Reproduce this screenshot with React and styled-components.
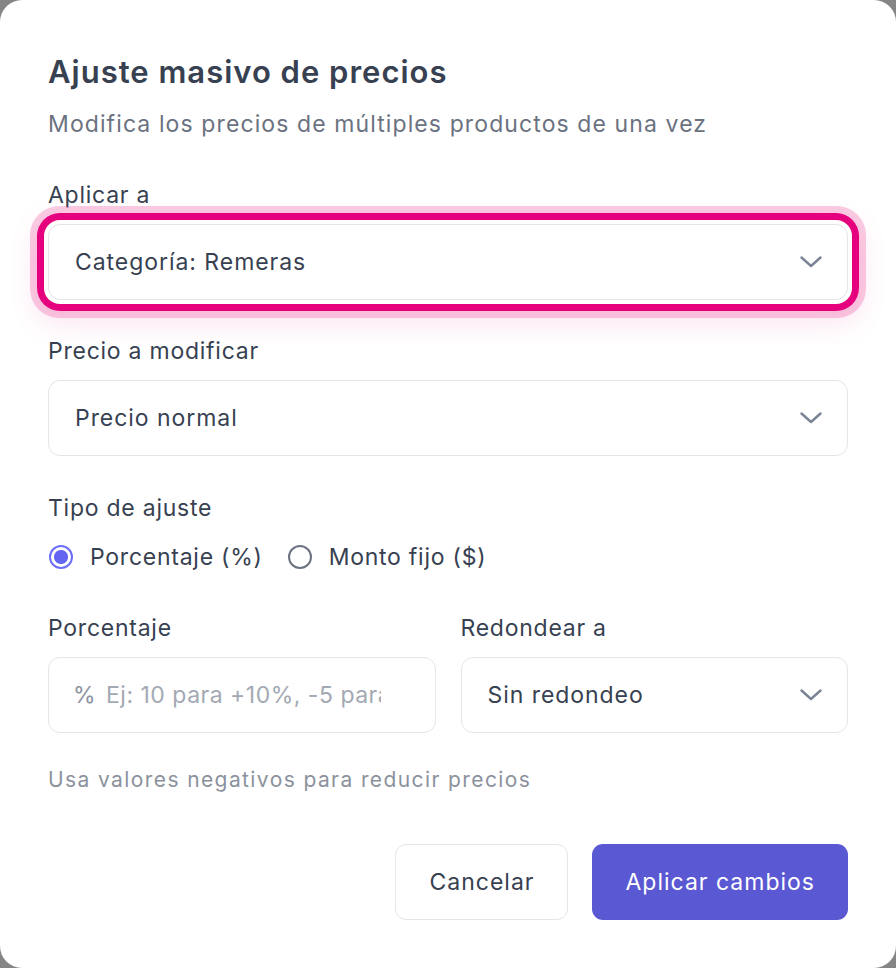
import React from "react";
import styled, { createGlobalStyle } from "styled-components";

const Global = createGlobalStyle`
  * { box-sizing: border-box; }
  html, body { margin: 0; padding: 0; background: #858585; }
  body { font-family: Inter, "Noto Sans", sans-serif; -webkit-font-smoothing: antialiased; }
  #root { min-height: 968px; }
`;

const Dialog = styled.div`
  width: 896px;
  height: 968px;
  background: #ffffff;
  border-radius: 22px;
  padding: 54px 48px 48px;
  display: flex;
  flex-direction: column;
  color: #374151;
`;

const Title = styled.h2`
  margin: 0;
  font-size: 31px;
  line-height: 36px;
  font-weight: 600;
  color: #374151;
  letter-spacing: 1px;
`;

const Subtitle = styled.p`
  margin: 18px 0 0;
  font-size: 23px;
  line-height: 32px;
  color: #6b7280;
  letter-spacing: 1.1px;
`;

const Field = styled.div`
  display: flex;
  flex-direction: column;
  gap: ${(p) => (p.$tight ? 0 : 13)}px;
  margin-top: ${(p) => p.$mt || 0}px;
  min-width: 0;
`;

const Label = styled.label`
  font-size: 23px;
  line-height: 32px;
  color: #374151;
  letter-spacing: 0.75px;
`;

const SelectBox = styled.div`
  position: relative;
  height: 76px;
  border: 1.5px solid #e3e6ea;
  border-radius: 12px;
  background: #fff;
  display: flex;
  align-items: center;
  justify-content: space-between;
  padding: 0 25px 0 26px;
  font-size: 23px;
  color: #374151;
  letter-spacing: 0.95px;
  box-shadow: ${(p) =>
    p.$highlight
      ? "0 0 0 4px #ffffff, 0 0 0 11px #e5007d, 0 0 0 18px rgba(236, 72, 153, 0.28), 0 10px 26px 14px rgba(236, 72, 153, 0.14)"
      : "none"};
`;

const Chevron = () => (
  <svg width="22" height="12" viewBox="0 0 22 12" fill="none">
    <path d="M1.5 1.5L11 10L20.5 1.5" stroke="#7b8494" strokeWidth="2.4" strokeLinecap="round" strokeLinejoin="round" />
  </svg>
);

const RadioRow = styled.div`
  display: flex;
  align-items: center;
  gap: 24px;
  margin-top: 17px;
  height: 32px;
`;

const RadioOption = styled.label`
  display: flex;
  align-items: center;
  gap: 17px;
  font-size: 23px;
  color: #374151;
  letter-spacing: 0.75px;
  cursor: pointer;
`;

const RadioInput = styled.input`
  appearance: none;
  margin: 0 0 0 1px;
  width: 24px;
  height: 24px;
  border-radius: 50%;
  border: 2px solid #6b7280;
  background: #fff;
  &:checked {
    border: 2.5px solid #6b6ef8;
    background: radial-gradient(circle, #6366f1 0 6.5px, #ffffff 7.5px);
  }
`;

const Grid = styled.div`
  display: grid;
  grid-template-columns: 1fr 1fr;
  gap: 25px;
  margin-top: 39px;
`;

const InputBox = styled.div`
  position: relative;
  height: 76px;
  border: 1.5px solid #e3e6ea;
  border-radius: 12px;
  display: flex;
  align-items: center;
`;

const Prefix = styled.span`
  position: absolute;
  left: 24px;
  font-size: 23px;
  color: #8d949f;
`;

const TextInput = styled.input`
  width: 100%;
  height: 100%;
  border: none;
  outline: none;
  background: transparent;
  padding: 0 54px 0 57px;
  font-family: inherit;
  font-size: 23px;
  letter-spacing: 0.5px;
  color: #374151;
  border-radius: 12px;
  &::placeholder { color: #a3a9b3; }
`;

const Hint = styled.p`
  margin: 33px 0 0;
  font-size: 21px;
  line-height: 28px;
  color: #8b929d;
  letter-spacing: 1.4px;
`;

const Footer = styled.div`
  margin-top: auto;
  display: flex;
  justify-content: flex-end;
  gap: 24px;
`;

const Button = styled.button`
  height: 76px;
  padding: 0 33px;
  border-radius: 11px;
  font-family: inherit;
  font-size: 23px;
  letter-spacing: 1px;
  cursor: pointer;
  border: ${(p) => (p.$primary ? "none" : "1.5px solid #e3e6ea")};
  background: ${(p) => (p.$primary ? "#5a58d2" : "#ffffff")};
  color: ${(p) => (p.$primary ? "#ffffff" : "#374151")};
`;

export default function App() {
  return (
    <>
      <Global />
      <Dialog>
        <Title>Ajuste masivo de precios</Title>
        <Subtitle>Modifica los precios de múltiples productos de una vez</Subtitle>

        <Field $mt={39}>
          <Label>Aplicar a</Label>
          <SelectBox $highlight>
            <span>Categoría: Remeras</span>
            <Chevron />
          </SelectBox>
        </Field>

        <Field $mt={35}>
          <Label>Precio a modificar</Label>
          <SelectBox>
            <span>Precio normal</span>
            <Chevron />
          </SelectBox>
        </Field>

        <Field $mt={36} $tight>
          <Label>Tipo de ajuste</Label>
          <RadioRow>
            <RadioOption>
              <RadioInput type="radio" name="tipo" defaultChecked />
              Porcentaje (%)
            </RadioOption>
            <RadioOption>
              <RadioInput type="radio" name="tipo" />
              Monto fijo ($)
            </RadioOption>
          </RadioRow>
        </Field>

        <Grid>
          <Field>
            <Label>Porcentaje</Label>
            <InputBox>
              <Prefix>%</Prefix>
              <TextInput placeholder="Ej: 10 para +10%, -5 para -5%" />
            </InputBox>
          </Field>
          <Field>
            <Label>Redondear a</Label>
            <SelectBox>
              <span>Sin redondeo</span>
              <Chevron />
            </SelectBox>
          </Field>
        </Grid>

        <Hint>Usa valores negativos para reducir precios</Hint>

        <Footer>
          <Button>Cancelar</Button>
          <Button $primary>Aplicar cambios</Button>
        </Footer>
      </Dialog>
    </>
  );
}
